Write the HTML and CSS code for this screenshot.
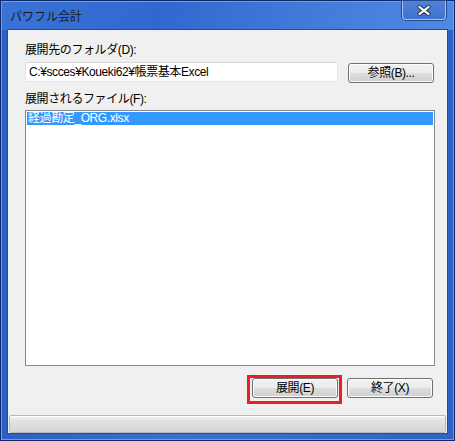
FILE: index.html
```html
<!DOCTYPE html>
<html lang="ja">
<head>
<meta charset="utf-8">
<title>パワフル会計</title>
<link rel="stylesheet" href="styles.css">
</head>
<body>
<div class="window">
  <div class="titlebar">
    <span class="title">パワフル会計</span>
    <div class="close">
      <svg width="14" height="11" viewBox="0 0 14 11">
        <path d="M2.5 2 L11.5 9 M11.5 2 L2.5 9" stroke="#3a4452" stroke-width="4.4" stroke-linecap="round"/>
        <path d="M2.5 2 L11.5 9 M11.5 2 L2.5 9" stroke="#ffffff" stroke-width="2.2" stroke-linecap="round"/>
      </svg>
    </div>
  </div>
  <div class="client">
    <div class="label label-first">展開先のフォルダ(D):</div>
    <div class="folder-row">
      <div class="field">C:¥scces¥Koueki62¥帳票基本Excel</div>
      <div class="btn btn-browse">参照(B)...</div>
    </div>
    <div class="label label-second">展開されるファイル(F):</div>
    <div class="listbox">
      <div class="item selected">経過勘定_ORG.xlsx</div>
    </div>
    <div class="actions">
      <div class="highlight">
        <div class="btn">展開(E)</div>
      </div>
      <div class="btn">終了(X)</div>
    </div>
    <div class="statusbar"></div>
  </div>
</div>
</body>
</html>
```
FILE: styles.css
```css
html, body {
  margin: 0;
  padding: 0;
  background: #ffffff;
}

body {
  font-family: "Liberation Sans", "Noto Sans CJK JP", sans-serif;
  font-size: 12px;
  color: #000000;
  letter-spacing: -0.4px;
}

.window {
  width: 455px;
  height: 441px;
  box-sizing: border-box;
  display: flex;
  flex-direction: column;
  background: linear-gradient(90deg, #2d5fc6 0%, #3a6fd6 40%, #2e62c9 100%);
  border: 1px solid #0f2a68;
  box-shadow: inset 0 0 0 1px #6f9ce6;
  padding: 0 7px 7px 7px;
}

.titlebar {
  height: 29px;
  display: flex;
  align-items: flex-start;
  justify-content: space-between;
  background: linear-gradient(100deg, #3a73d6 0%, #2f68cf 35%, #3f7ad9 65%, #5089e2 100%);
  margin: 1px -6px 0 -6px;
  padding: 0 6px 0 8px;
}

.title {
  padding-top: 7px;
  line-height: 14px;
  color: #1a1a1a;
  font-family: "Noto Sans CJK JP", sans-serif;
  letter-spacing: 0;
}

.close {
  width: 44px;
  height: 19px;
  margin-top: -1px;
  margin-right: 1px;
  box-sizing: border-box;
  border: 1px solid #a9c4ee;
  border-top: none;
  border-radius: 0 0 4px 4px;
  background: linear-gradient(180deg, #5182d9 0%, #3e72d2 100%);
  box-shadow: 0 0 0 1px #26478c;
  display: flex;
  align-items: center;
  justify-content: center;
}

.client {
  flex: 1;
  background: #f0f0f0;
  box-shadow: 0 0 0 1px #284c93;
  padding: 13px 12px 0 17px;
  display: flex;
  flex-direction: column;
}

.label {
  line-height: 14px;
  height: 14px;
  white-space: nowrap;
}

.label-second {
  margin-top: 9px;
}

.folder-row {
  margin-top: 5px;
  display: flex;
  align-items: flex-start;
  gap: 10px;
}

.field {
  width: 313px;
  height: 20px;
  box-sizing: border-box;
  background: #ffffff;
  border: 1px solid #e3e3e3;
  border-top-color: #d8d8d8;
  border-radius: 2px;
  padding: 2px 0 0 3px;
  line-height: 15px;
  white-space: nowrap;
}

.btn {
  width: 86px;
  height: 20px;
  box-sizing: border-box;
  border: 1px solid #707070;
  border-radius: 3px;
  background: linear-gradient(180deg, #f2f2f2 0%, #ebebeb 48%, #dddddd 52%, #cfcfcf 100%);
  box-shadow: inset 0 0 0 1px #fcfcfc;
  display: flex;
  align-items: center;
  justify-content: center;
  line-height: 14px;
  white-space: nowrap;
}

.btn-browse {
  margin-top: 1px;
}

.listbox {
  margin-top: 4px;
  width: 410px;
  height: 256px;
  box-sizing: border-box;
  background: #ffffff;
  border: 1px solid #828790;
  padding: 1px;
}

.item {
  height: 13px;
  line-height: 13px;
  padding-left: 1px;
  white-space: nowrap;
}

.selected {
  background: #3399ff;
  color: #ffffff;
}

.actions {
  margin-top: 9px;
  display: flex;
  justify-content: flex-end;
  align-items: flex-start;
  gap: 5px;
  padding-right: 2px;
}

.highlight {
  border: 3px solid #e8202a;
  padding: 0 1px 3px 2px;
}

.actions > .btn {
  margin-top: 3px;
}

.statusbar {
  margin: 11px -11px 0 -16px;
  height: 18px;
  box-sizing: border-box;
  border: 1px solid #b9b9b9;
  border-radius: 2px;
  background: linear-gradient(180deg, #f4f4f4 0%, #e2e2e2 30%, #d6d6d6 100%);
  box-shadow: inset 0 1px 0 #ffffff;
}
```
